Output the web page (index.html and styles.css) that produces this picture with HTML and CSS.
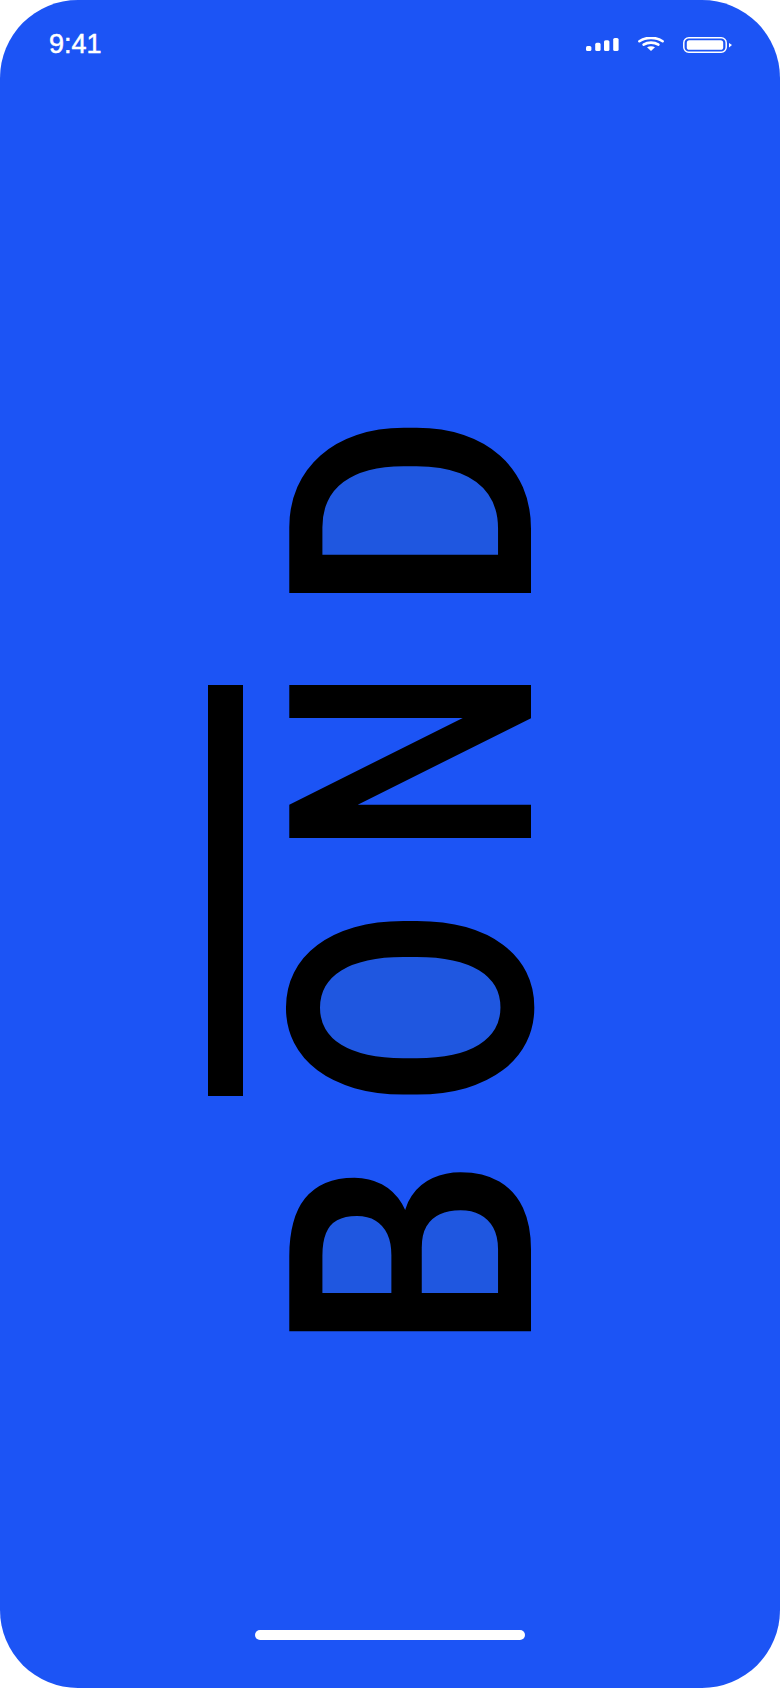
FILE: index.html
```html
<!DOCTYPE html>
<html lang="en">
<head>
<meta charset="utf-8">
<title>BOND</title>
<link rel="stylesheet" href="styles.css">
</head>
<body>
<main class="screen">
  <header class="status">
    <span class="time">9:41</span>
    <div class="status-icons">
      <svg class="signal" viewBox="0 0 33 13" width="33" height="13" aria-hidden="true">
        <rect x="0" y="8" width="5.4" height="5" rx="1.6"/>
        <rect x="9.2" y="4.8" width="5.4" height="8.2" rx="1.6"/>
        <rect x="18" y="2.2" width="5.4" height="10.8" rx="1.6"/>
        <rect x="27.2" y="0" width="5.4" height="13" rx="1.6"/>
      </svg>
      <svg class="wifi" viewBox="0 0 26 14" width="26" height="14" aria-hidden="true">
        <path class="arc" d="M1.4 4.2C7.6 -0.2 18.4 -0.2 24.6 4.2"/>
        <path class="arc" d="M5.6 7.6C9.8 5 16.2 5 20.4 7.6"/>
        <path class="wedge" d="M9 10.2C11.4 8.9 14.6 8.9 17 10.2L13 14Z"/>
      </svg>
      <svg class="battery" viewBox="0 0 50 16" width="50" height="16" aria-hidden="true">
        <rect class="shell" x="0.8" y="0.8" width="42.4" height="14.4" rx="5"/>
        <rect x="3.8" y="3.2" width="36.4" height="9.6" rx="2.6"/>
        <path d="M46 6L49 8L46 10.6Z"/>
      </svg>
    </div>
  </header>

  <svg class="logo" viewBox="180 370 460 1000" width="460" height="1000" role="img" aria-label="BOND">
    <path class="counter" d="M315 562V515C315 475 360 455 410 455C470 455 506 485 506 520V562Z"/>
    <ellipse class="counter" cx="410" cy="1009" rx="98" ry="58"/>
    <path class="counter" d="M314 1302V1265C314 1225 330 1205 355 1205C385 1205 396 1225 396 1265V1302Z"/>
    <path class="counter" d="M416 1302V1255C416 1220 435 1198 460 1198C490 1198 506 1220 506 1255V1302Z"/>
    <text class="glyph" transform="translate(531 1332.6) rotate(-90) scale(0.92 1)" x="-23">B</text>
    <text class="glyph" transform="translate(531 1096) rotate(-90) scale(0.865 1)" x="-15">O</text>
    <text class="glyph" transform="translate(531 839) rotate(-90) scale(0.798 1)" x="-23.2">N</text>
    <text class="glyph" transform="translate(531 592) rotate(-90) scale(0.915 1)" x="-25.5">D</text>
    <rect class="overline" x="208" y="685" width="35" height="411"/>
  </svg>

  <div class="home-bar"></div>
</main>
</body>
</html>
```
FILE: styles.css
```css
* { box-sizing: border-box; }

html, body {
  margin: 0;
  width: 780px;
  height: 1688px;
  background: #fff;
}

.screen {
  width: 780px;
  height: 1688px;
  display: flex;
  flex-direction: column;
  background: #1c54f5;
  border-radius: 78px;
  overflow: hidden;
  font-family: "Liberation Sans", Arial, sans-serif;
}

.status {
  height: 100px;
  padding: 28px 49px 0 49px;
  display: flex;
  justify-content: space-between;
  align-items: flex-start;
  color: #fff;
}

.time {
  font-size: 27px;
  line-height: 32px;
  font-weight: 400;
  -webkit-text-stroke: 0.5px #fff;
}

.status-icons {
  display: flex;
  align-items: flex-start;
  gap: 18px;
  margin-top: 8px;
  margin-right: -2px;
}

.status-icons svg { display: block; fill: #fff; }
.signal { margin-top: 2px; margin-right: 1px; }
.wifi { margin-top: 1px; margin-right: 1px; }
.battery { margin-top: 1px; }
.wifi .arc { fill: none; stroke: #fff; stroke-width: 2.6; stroke-linecap: round; }
.battery .shell { fill: none; stroke: #fff; stroke-width: 1.5; }

.logo {
  display: block;
  margin: 270px 0 0 180px;
}

.counter { fill: #1f57e0; }
.overline { fill: #000; }

.glyph {
  font-family: Roboto, "Liberation Sans", sans-serif;
  font-weight: 500;
  font-size: 340px;
  fill: #000;
}

.home-bar {
  align-self: center;
  width: 270px;
  height: 10px;
  margin-top: auto;
  margin-bottom: 48px;
  border-radius: 5px;
  background: #fff;
}
```
